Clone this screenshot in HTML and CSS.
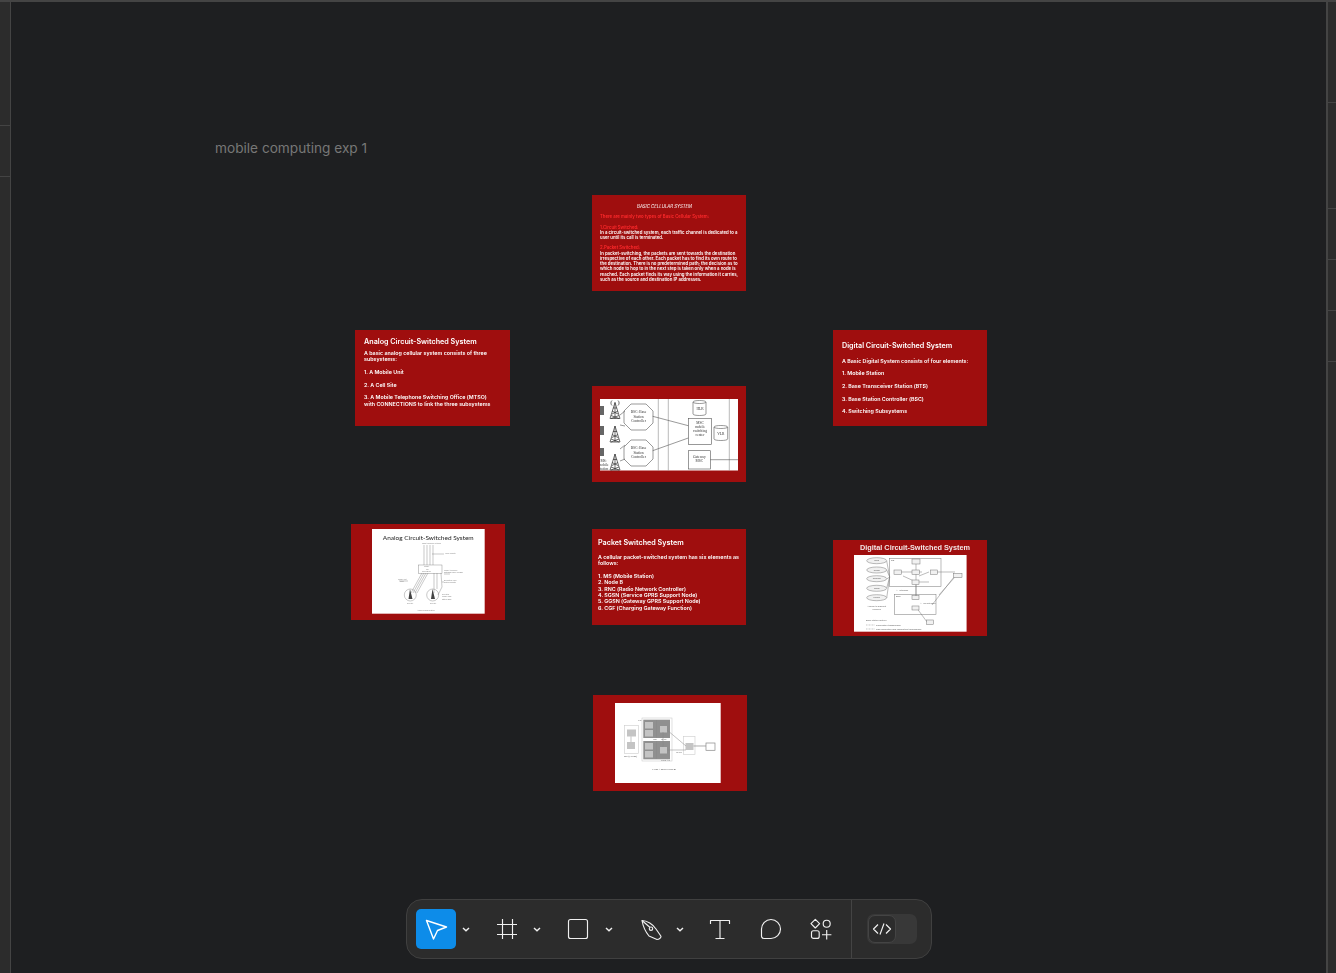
FILE: index.html
```html
<!DOCTYPE html>
<html lang="en">
<head>
<meta charset="utf-8">
<title>mobile computing exp 1</title>
<link rel="stylesheet" href="styles.css">
</head>
<body>
<div class="topbar"></div>
<div class="shell">
  <aside class="side side-left">
    <div class="sec sec-l1"></div>
    <div class="sec sec-l2"></div>
    <div class="sec sec-fill"></div>
  </aside>
  <main class="canvas">
    <div class="page-label">mobile computing exp 1</div>

    <section class="frame f-basic">
      <p class="b-title">BASIC CELLULAR SYSTEM</p>
      <p class="b-red b-lead">There are mainly two types of Basic Cellular System:</p>
      <p class="b-red b-sub">1.Circuit Switched:</p>
      <p class="b-text">In a circuit-switched system, each traffic channel is dedicated to a<br>user until its call is terminated.</p>
      <p class="b-red b-sub2">2.Packet Switched:</p>
      <p class="b-text">In packet-switching, the packets are sent towards the destination<br>irrespective of each other. Each packet has to find its own route to<br>the destination. There is no predetermined path; the decision as to<br>which node to hop to in the next step is taken only when a node is<br>reached. Each packet finds its way using the information it carries,<br>such as the source and destination IP addresses.</p>
    </section>

    <section class="frame f-analog">
      <h2 class="s-title">Analog Circuit-Switched System</h2>
      <p class="s-text">A basic analog cellular system consists of three<br>subsystems:<br><br>1. A Mobile Unit<br><br>2. A Cell Site<br><br>3. A Mobile Telephone Switching Office (MTSO)<br>with CONNECTIONS to link the three subsystems</p>
    </section>

    <section class="frame f-digital">
      <h2 class="s-title">Digital Circuit-Switched System</h2>
      <div class="d-list">
        <p class="s-text">A Basic Digital System consists of four elements:</p>
        <p class="s-text">1. Mobile Station</p>
        <p class="s-text">2. Base Transceiver Station (BTS)</p>
        <p class="s-text">3. Base Station Controller (BSC)</p>
        <p class="s-text">4. Switching Subsystems</p>
      </div>
    </section>

    <section class="frame f-packet">
      <h2 class="s-title">Packet Switched System</h2>
      <p class="s-text">A cellular packet-switched system has six elements as<br>follows:<br><br>1. MS (Mobile Station)<br>2. Node B<br>3. RNC (Radio Network Controller)<br>4. SGSN (Service GPRS Support Node)<br>5. GGSN (Gateway GPRS Support Node)<br>6. CGF (Charging Gateway Function)</p>
    </section>

    <section class="frame f-network">
      <svg class="diagram d-network" viewBox="0 0 138 71.5">
        <rect width="138" height="71.5" fill="#fff"/>
        <g fill="none" stroke="#8c8c8c" stroke-width=".6">
          <path d="M58.3 0V71.5M68.3 0V71.5M129.3 0V71.5"/>
        </g>
        <g fill="#fff" stroke="#555" stroke-width=".6">
          <path d="M31 5H46L53 12V24L46 31H31L24 24V12Z"/>
          <path d="M31 41H46L53 48V60L46 67H31L24 60V48Z"/>
          <rect x="88.3" y="19.3" width="23.3" height="26.3"/>
          <rect x="88.3" y="51.7" width="22" height="18.3"/>
          <path d="M93 3V15C93 17 106 17 106 15V3C106 1 93 1 93 3ZM93 3C93 5 106 5 106 3"/>
          <path d="M114 28V40C114 42 127.7 42 127.7 40V28C127.7 26 114 26 114 28ZM114 28C114 30 127.7 30 127.7 28"/>
          <path d="M52.7 17.3L88.3 26.7M52.7 51.7L88.3 39M110.3 60.7H138M20 16L25 12M20 26L25 27M20 50L25 46M20 62L25 60"/>
        </g>
        <g fill="none" stroke="#333" stroke-width=".7">
          <path d="M15 3.500L10 19.500H20ZM15 3.500V19.500M13 9H17M12 12L18 15M18 12L12 15M11 16.500L19 19.500M19 16.500L11 19.500M12 1.500C10.500 3 10.500 5 12 6.500M18 1.500C19.500 3 19.500 5 18 6.500"/>
          <path d="M15 27L10 43H20ZM15 27V43M13 32.500H17M12 35.500L18 38.500M18 35.500L12 38.500M11 40L19 43M19 40L11 43"/>
          <path d="M15 55L10 71H20ZM15 55V71M13 60.500H17M12 63.500L18 66.500M18 63.500L12 66.500M11 68L19 71M19 68L11 71"/>
        </g>
        <g fill="#666">
          <rect x="0" y="7" width="4" height="9"/>
          <rect x="0" y="27" width="4" height="9"/>
          <rect x="0" y="49" width="4" height="8"/>
        </g>
        <g class="serif" text-anchor="middle" font-size="3.600" fill="#333">
          <text x="38.500" y="14">BSC: Base</text><text x="38.500" y="18.500">Station</text><text x="38.500" y="23">Controller</text>
          <text x="38.500" y="50">BSC: Base</text><text x="38.500" y="54.500">Station</text><text x="38.500" y="59">Controller</text>
          <text x="100" y="10.500">HLR</text>
          <text x="120.800" y="35.500">VLR</text>
          <text x="100" y="25">MSC</text><text x="100" y="29">mobile</text><text x="100" y="33">switching</text><text x="100" y="37">center</text>
          <text x="99.300" y="59">Gateway</text><text x="99.300" y="63">MSC</text>
          <text x="3.500" y="63">MS:</text><text x="3.500" y="67">mobile</text><text x="3.500" y="71">station</text>
        </g>
      </svg>
    </section>

    <section class="frame f-analog-img">
      <svg class="diagram d-analog" viewBox="0 0 112.700 84.700">
        <rect width="112.700" height="84.700" fill="#fff"/>
        <text class="lato" x="56.300" y="11.300" text-anchor="middle" font-size="6.500" fill="#222">Analog Circuit-Switched System</text>
        <g fill="none" stroke="#777" stroke-width=".4">
          <path d="M52 16V36M55 16V36M58 16V36M61 16V36"/>
          <rect x="46.700" y="36" width="23.300" height="8.300"/>
          <circle cx="38.300" cy="66" r="6"/>
          <circle cx="60.700" cy="66" r="6"/>
          <path d="M50 44L39 64M52 44L41 64M54 44L43 64M56 44L45 64M62 44V64M65 44V60M69 44L70 58L66 66"/>
          <path d="M60 25H72M72 45H78M70 53H72M27 52H36"/>
        </g>
        <path d="M38 60L36.500 70H40.500ZM60.500 60L59 70H63Z" fill="#444"/>
        <g class="sans" fill="#777" font-size="1.800">
          <text x="50" y="15.500">Land telephone network</text>
          <text x="73" y="25.500">Voice circuits</text>
          <text x="52" y="38.500">Mobile</text><text x="54" y="40.800">cell</text><text x="50" y="43">processors</text>
          <text x="72" y="42">Mobile telephone</text><text x="72" y="44.500">switching office (MTSO)</text>
          <text x="72" y="52">Dedicated voice</text><text x="72" y="54.500">system circuits</text>
          <text x="26" y="51">Mobile unit</text><text x="28" y="53.500">(MU)</text>
          <text x="70" y="66">Cell sites</text><text x="70" y="68.500">Mobile base</text><text x="70" y="71">station (BS)</text>
          <text x="35" y="75">Cell site</text><text x="58" y="75">Cell site</text>
          <text x="45" y="82">Analog cellular system</text>
        </g>
      </svg>
    </section>

    <section class="frame f-digital-img">
      <h3 class="img-title">Digital Circuit-Switched System</h3>
      <svg class="diagram d-digital" viewBox="0 0 112.600 76.700">
        <rect width="112.600" height="76.700" fill="#fff"/>
        <g fill="none" stroke="#777" stroke-width=".5">
          <rect x="35.700" y="3.300" width="51.300" height="28.400"/>
          <rect x="40.300" y="39.300" width="41.700" height="20"/>
          <path d="M32.700 6L35.700 22M32.700 15L35.700 22M32.700 24L35.700 22M32.700 33L35.700 22M32.700 43L35.700 22"/>
          <path d="M62 6V42M43 17H68M62 27H75M78 17H101M65 21L75 17M49 21L60 26M62 30V42M62 52L73 67M85 40L101 22M78 50L100 22"/>
        </g>
        <g fill="#f1f1f1" stroke="#777" stroke-width=".5">
          <ellipse cx="22.700" cy="5.700" rx="10" ry="3"/>
          <ellipse cx="22.700" cy="15" rx="10" ry="3"/>
          <ellipse cx="22.700" cy="23.700" rx="10" ry="3"/>
          <ellipse cx="22.700" cy="33.300" rx="10" ry="3"/>
          <ellipse cx="22.700" cy="42.700" rx="10" ry="3"/>
          <rect x="58" y="4" width="8" height="5"/>
          <rect x="40" y="15" width="7.300" height="4.300"/>
          <rect x="58" y="15" width="7.300" height="4.300"/>
          <rect x="76.700" y="15" width="6.600" height="4.300"/>
          <rect x="58" y="25" width="7" height="4.300"/>
          <rect x="58" y="40.700" width="7" height="4"/>
          <rect x="58" y="51" width="7" height="4"/>
          <rect x="72.700" y="65" width="6.600" height="4.300"/>
          <rect x="99.300" y="18.300" width="8.700" height="4.400"/>
        </g>
        <g class="sans" fill="#555" font-size="2.300">
          <g text-anchor="middle">
            <text x="22.700" y="6.500">MSC</text><text x="22.700" y="15.800">PSTN</text><text x="22.700" y="24.500">CSPDN</text><text x="22.700" y="34.100">ISDN</text><text x="22.700" y="43.500">PLMN</text>
            <text x="22.700" y="52">Access to different</text><text x="22.700" y="55.500">services</text>
          </g>
          <text x="37" y="6.500">NS</text><text x="42" y="42">BSS</text>
          <text x="42" y="36.500">A - Interface</text><text x="66" y="49">A - bis interface</text>
          <text x="12" y="66.500">Base station system</text><text x="22" y="70.800">Information transmission</text><text x="22" y="74.800">Call connection and information transmission</text>
        </g>
        <path d="M12 70H21M12 74H21" stroke="#777" stroke-width=".4" stroke-dasharray="1 .5"/>
      </svg>
    </section>

    <section class="frame f-cdma">
      <svg class="diagram d-cdma" viewBox="0 0 105.700 80">
        <rect width="105.700" height="80" fill="#fff"/>
        <g fill="none" stroke="#ccc" stroke-width=".6">
          <rect x="9.300" y="22.300" width="14" height="28.400"/>
          <rect x="27" y="15" width="30" height="43"/>
          <rect x="68.300" y="33.300" width="11.700" height="18.400"/>
        </g>
        <rect x="28.300" y="16.700" width="26.700" height="18.300" fill="#909090"/>
        <rect x="28.300" y="38" width="26.700" height="18.300" fill="#909090"/>
        <g fill="#c4c4c4">
          <rect x="12" y="26.500" width="9" height="7"/>
          <rect x="12" y="39" width="8" height="7"/>
          <rect x="30" y="19" width="8" height="6.500"/>
          <rect x="30" y="27" width="8" height="6.500"/>
          <rect x="30" y="40" width="8" height="6.500"/>
          <rect x="30" y="48" width="8" height="6.500"/>
          <rect x="45" y="23" width="7" height="6.500"/>
          <rect x="45" y="44" width="7" height="6.500"/>
          <rect x="70.500" y="40" width="8" height="7"/>
        </g>
        <g fill="none" stroke="#888" stroke-width=".5">
          <path d="M41.500 17V35M41.500 38V56M48 29V44M52 27L71 43M52 47H71"/>
          <path d="M16 33.500V39" />
          <path d="M78.500 43H91" stroke-width=".7"/>
          <rect x="91" y="40" width="9" height="7.300" fill="#fff" stroke-width=".7"/>
        </g>
        <g class="serif" fill="#444" font-size="2.700">
          <text x="23" y="18">Gp</text><text x="38" y="36.800">Iub</text><text x="46" y="36.800">Iu-cs</text>
          <text x="61" y="50">Iu PS</text><text x="46" y="57.800">UTRAN</text>
          <text x="9" y="53.700">MS (USIM)</text><text x="49" y="67.500" text-anchor="middle">CDMA packet system</text>
        </g>
      </svg>
    </section>

    <nav class="toolbar" aria-label="Tools">
      <div class="tool-group">
        <button class="tool tool-active" aria-label="Move">
          <svg class="ico" viewBox="0 0 24 24"><path d="M2.500 3.500L22.500 10L13.500 13.500L9.500 22Z"/></svg>
        </button>
        <span class="chev"><svg viewBox="0 0 8 5"><path d="M1 1L4 3.800L7 1"/></svg></span>
      </div>
      <div class="tool-group">
        <button class="tool" aria-label="Frame">
          <svg class="ico" viewBox="0 0 24 24"><path d="M7.500 2V22M17.500 2V22M2 7.500H22M2 17.500H22"/></svg>
        </button>
        <span class="chev"><svg viewBox="0 0 8 5"><path d="M1 1L4 3.800L7 1"/></svg></span>
      </div>
      <div class="tool-group">
        <button class="tool" aria-label="Rectangle">
          <svg class="ico" viewBox="0 0 24 24"><rect x="2.500" y="2.500" width="19" height="19" rx="2"/></svg>
        </button>
        <span class="chev chev-wide"><svg viewBox="0 0 8 5"><path d="M1 1L4 3.800L7 1"/></svg></span>
      </div>
      <div class="tool-group">
        <button class="tool" aria-label="Pen">
          <svg class="ico ico-pen" viewBox="0 0 24 24"><path d="M4 3.500C9 3.500 15 7.500 18 12L23 19.300C23 21 21 22.500 19 22.500L11 19C8.500 16 5.500 12 4 3.500Z"/><path d="M4 3.500L11.800 10.300"/><circle cx="13" cy="11.700" r="1.700"/></svg>
        </button>
        <span class="chev chev-narrow"><svg viewBox="0 0 8 5"><path d="M1 1L4 3.800L7 1"/></svg></span>
      </div>
      <button class="tool" aria-label="Text">
        <svg class="ico" viewBox="0 0 24 24"><path d="M2.500 7V3.500H21.500V7M12 3.500V21.500M7.500 21.500H16.500"/></svg>
      </button>
      <button class="tool" aria-label="Comment">
        <svg class="ico" viewBox="0 0 24 24"><path d="M12 2.500A9.500 9.500 0 0 1 12 21.500H5A2.500 2.500 0 0 1 2.500 19V12A9.500 9.500 0 0 1 12 2.500Z"/></svg>
      </button>
      <button class="tool" aria-label="Actions">
        <svg class="ico" viewBox="0 0 24 24"><path d="M5.300 2.400L9.600 6.700L5.300 11L1 6.700Z"/><circle cx="16.700" cy="6.700" r="3.500"/><rect x="1.500" y="13.700" width="7.700" height="7.700" rx="2"/><path d="M16.700 13V22.400M12 17.700H21.400"/></svg>
      </button>
      <div class="tb-divider"></div>
      <div class="toggle" aria-label="Dev mode">
        <span class="knob">
          <svg class="ico ico-code" viewBox="0 0 24 24"><path d="M8 7.500L3.500 12L8 16.500M16 7.500L20.500 12L16 16.500M14 6.500L10 17.500"/></svg>
        </span>
      </div>
    </nav>
  </main>
  <aside class="side side-right">
    <div class="sec sec-r1"></div>
    <div class="sec sec-r2"></div>
    <div class="sec sec-r3"></div>
    <div class="sec sec-r3"></div>
    <div class="sec sec-r3"></div>
    <div class="sec sec-fill"></div>
  </aside>
</div>
</body>
</html>
```

FILE: styles.css
```css
* { box-sizing: border-box; }
html, body { margin: 0; height: 100%; }
body {
  width: 1336px;
  height: 973px;
  overflow: hidden;
  display: flex;
  flex-direction: column;
  background: #1e1f21;
  font-family: Inter, "Liberation Sans", sans-serif;
}
p, h2, h3 { margin: 0; }

.topbar { height: 2px; flex: none; background: #444; }
.shell { flex: 1; display: flex; min-height: 0; }

.side { flex: none; display: flex; flex-direction: column; background: #2c2c2c; }
.side-left { width: 11px; border-right: 1px solid #444; }
.side-right { width: 10px; border-left: 2px solid #444; }
.sec { flex: none; border-bottom: 1px solid #444; }
.sec-fill { flex: 1; border-bottom: 0; }
.sec-l1 { height: 124px; }
.sec-l2 { height: 51px; }
.sec-r1 { height: 101px; }
.sec-r2 { height: 106px; }
.sec-r3 { height: 51px; }

.canvas { flex: 1; position: relative; min-width: 0; }

.page-label {
  position: absolute;
  left: 204px;
  top: 137px;
  font-size: 13.650px;
  line-height: 18px;
  color: #777;
  white-space: nowrap;
}

/* free-canvas frames */
.frame {
  position: absolute;
  width: 154px;
  height: 96px;
  background: #9f0e0e;
  color: #fff;
  font-weight: 600;
  white-space: nowrap;
  filter: blur(.2px);
}
.f-basic { left: 581px; top: 193px; padding: 9px 8px 0; }
.f-network { left: 581px; top: 384px; padding: 13px 8px 0; }
.f-analog { left: 344px; top: 328px; width: 155px; padding: 7px 9px 0; }
.f-digital { left: 822px; top: 328px; padding: 10.500px 9px 0; }
.f-packet { left: 581px; top: 527px; padding: 8.500px 6px 0; }
.f-analog-img { left: 340px; top: 522px; padding: 5px 21px 0; }
.f-digital-img { left: 822px; top: 538px; padding: 3px 21px 0; }
.f-cdma { left: 582px; top: 693px; padding: 8.300px 22px 0; }

.b-title { font-size: 4.300px; line-height: 5.300px; text-align: center; font-style: italic; font-weight: 400; margin-right: 9px; }
.b-red { color: #ff2a2c; font-size: 4.300px; line-height: 5.300px; }
.b-lead { margin-top: 4.800px; }
.b-sub { margin-top: 5.300px; }
.b-sub2 { margin-top: 4.700px; }
.b-text { font-size: 4.300px; line-height: 5.300px; }

.s-title { font-size: 7.200px; line-height: 9px; font-weight: 600; }
.s-text { font-size: 5.350px; line-height: 6.400px; }
.f-analog .s-text { margin-top: 3.500px; }
.f-packet .s-text { margin-top: 7px; }
.d-list { margin-top: 8px; display: flex; flex-direction: column; gap: 6.300px; }

.diagram { display: block; font-weight: 400; }
.d-network { width: 138px; height: 71.500px; }
.d-analog { width: 112.700px; height: 84.700px; }
.d-digital { width: 112.600px; height: 76.700px; }
.d-cdma { width: 105.700px; height: 80px; }
.serif { font-family: "Liberation Serif", serif; }
.sans { font-family: "Liberation Sans", sans-serif; }
.lato { font-family: Lato, "Liberation Sans", sans-serif; }
.img-title {
  font-family: "Liberation Sans", sans-serif;
  font-size: 7.300px;
  line-height: 9px;
  font-weight: 700;
  text-align: center;
  color: #f2e6e6;
  margin: 0 -10px 3px;
  position: relative;
  left: 5px;
}

/* toolbar overlay */
.toolbar {
  position: absolute;
  left: 395px;
  top: 897px;
  width: 526px;
  height: 60px;
  padding: 9px 9px;
  display: flex;
  align-items: center;
  gap: 11px;
  background: #2c2c2c;
  border: 1px solid #404040;
  border-radius: 16px;
}
.tool-group { display: flex; align-items: center; flex: none; }
.tool {
  flex: none;
  width: 40px;
  height: 40px;
  padding: 0;
  border: 0;
  border-radius: 5px;
  background: none;
  display: flex;
  align-items: center;
  justify-content: center;
}
.tool-active { background: #0d8ce9; }
.ico {
  width: 24px;
  height: 24px;
  flex: none;
  fill: none;
  stroke: #f0f0f0;
  stroke-width: 1.150;
  stroke-linejoin: round;
  overflow: visible;
}
.tool-active .ico { stroke: #fff; stroke-width: 1.400; }
.chev { width: 20px; display: flex; justify-content: center; }
.chev-wide { width: 21px; }
.chev-narrow { width: 19px; }
.chev svg { width: 8px; height: 5px; fill: none; stroke: #f0f0f0; stroke-width: 1.400; }
.tb-divider { align-self: stretch; width: 1px; margin: -9px 0; background: #444; flex: none; margin-left: -2px; }
.toggle {
  width: 50px;
  height: 30px;
  margin-left: 4px;
  flex: none;
  background: #383838;
  border-radius: 7px;
  padding: 1px;
}
.knob {
  width: 28px;
  height: 28px;
  display: flex;
  align-items: center;
  justify-content: center;
  background: #2c2c2c;
  border: 1px solid #444;
  border-radius: 7px;
}
.ico-code { width: 24px; height: 24px; }
```
